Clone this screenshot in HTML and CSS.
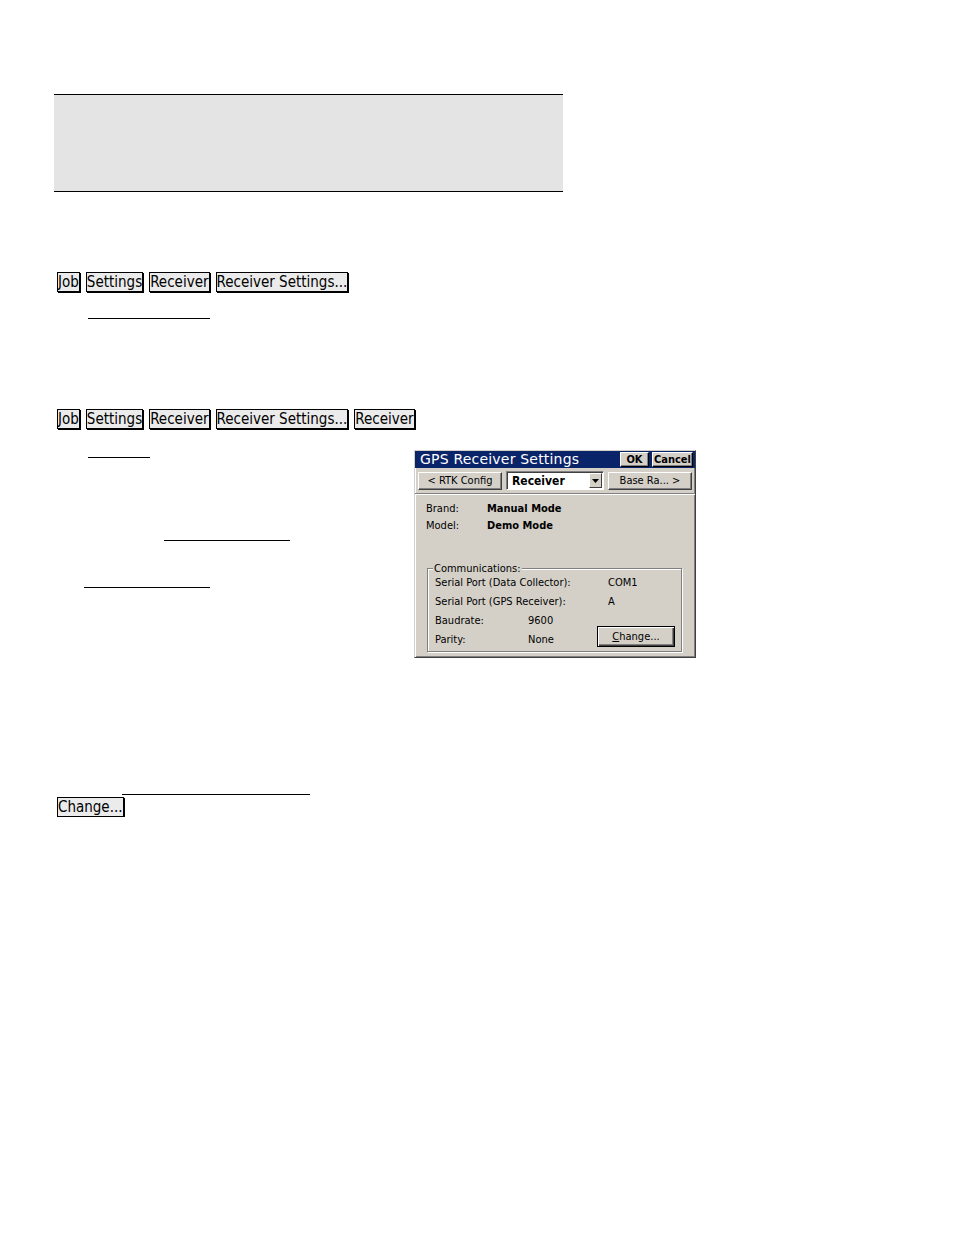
FILE: index.html
```html
<!DOCTYPE html>
<html>
<head>
<meta charset="utf-8">
<link rel="stylesheet" href="styles.css">
</head>
<body>
<div class="page">
  <div class="banner"></div>

  <div class="crumbs crumbs-1">
    <span class="crumb">Job</span>
    <span class="crumb">Settings</span>
    <span class="crumb">Receiver</span>
    <span class="crumb">Receiver Settings...</span>
  </div>
  <div class="blank blank-a"></div>

  <div class="crumbs crumbs-2">
    <span class="crumb">Job</span>
    <span class="crumb">Settings</span>
    <span class="crumb">Receiver</span>
    <span class="crumb">Receiver Settings...</span>
    <span class="crumb">Receiver</span>
  </div>

  <div class="section">
    <div class="left-col">
      <div class="blank blank-b"></div>
      <div class="blank blank-c"></div>
      <div class="blank blank-d"></div>
    </div>

    <div class="dialog">
      <div class="titlebar">
        <span class="title">GPS Receiver Settings</span>
        <span class="tbtn tbtn-ok">OK</span>
        <span class="tbtn tbtn-cancel">Cancel</span>
      </div>
      <div class="navrow">
        <span class="wbtn nav-prev">&lt; RTK Config</span>
        <span class="combo">
          <span class="combo-text">Receiver</span>
          <span class="combo-arrow"><svg width="7" height="4" viewBox="0 0 7 4"><path d="M0 0h7L3.5 4z" fill="#000"/></svg></span>
        </span>
        <span class="wbtn nav-next">Base Ra... &gt;</span>
      </div>
      <div class="sep"></div>
      <div class="info">
        <div class="info-row"><span class="info-label">Brand:</span><span class="info-value">Manual Mode</span></div>
        <div class="info-row"><span class="info-label">Model:</span><span class="info-value">Demo Mode</span></div>
      </div>
      <div class="group">
        <span class="legend">Communications:</span>
        <div class="grow"><span class="glabel wide">Serial Port (Data Collector):</span><span>COM1</span></div>
        <div class="grow"><span class="glabel wide">Serial Port (GPS Receiver):</span><span>A</span></div>
        <div class="gsplit">
          <div class="gleft">
            <div class="grow"><span class="glabel narrow">Baudrate:</span><span>9600</span></div>
            <div class="grow"><span class="glabel narrow">Parity:</span><span>None</span></div>
          </div>
          <span class="wbtn change-btn"><u>C</u>hange...</span>
        </div>
      </div>
    </div>
  </div>

  <div class="blank blank-e"></div>
  <div class="bottom-btn-row">
    <span class="crumb">Change...</span>
  </div>
</div>
</body>
</html>
```
FILE: styles.css
```css
html, body {
  margin: 0;
  padding: 0;
  background: #fff;
}
.page {
  padding-top: 94px;
  font-family: "DejaVu Sans Condensed", "DejaVu Sans", sans-serif;
  font-stretch: condensed;
  color: #000;
}
.banner {
  margin-left: 54px;
  width: 509px;
  height: 96px;
  background: #e4e4e4;
  border-top: 1px solid #000;
  border-bottom: 1px solid #000;
}
.crumbs {
  display: flex;
  gap: 6px;
  padding-left: 57px;
}
.crumbs-1 { margin-top: 80px; }
.crumbs-2 { margin-top: 90px; }
.crumb {
  display: inline-block;
  height: 18px;
  line-height: 18px;
  font-size: 15px;
  background: #ebebeb;
  border: 1px solid #000;
  box-shadow: 1px 1px 0 #000;
  white-space: nowrap;
}
.blank {
  border-top: 1px solid #000;
  height: 0;
}
.blank-a { margin-left: 88px; width: 122px; margin-top: 26px; }
.section {
  display: flex;
  margin-top: 21px;
}
.left-col {
  width: 414px;
  flex: none;
}
.blank-b { margin-left: 88px; width: 62px; margin-top: 7px; }
.blank-c { margin-left: 164px; width: 126px; margin-top: 82px; }
.blank-d { margin-left: 84px; width: 126px; margin-top: 46px; }

.dialog {
  width: 280px;
  height: 206px;
  background: #d4d0c8;
  border: 1px solid;
  border-color: #d4d0c8 #404040 #404040 #d4d0c8;
  box-shadow: inset 1px 1px 0 #fff, inset -1px -1px 0 #808080;
  font-family: "DejaVu Sans Condensed", "DejaVu Sans", sans-serif;
  font-stretch: condensed;
  font-size: 11px;
}
.titlebar {
  display: flex;
  align-items: center;
  height: 17px;
  margin: 0;
  background: #0a246a;
  padding-left: 5px;
  padding-right: 2px;
}
.title {
  color: #fff;
  font-family: "DejaVu Sans", sans-serif;
  font-stretch: normal;
  font-size: 14px;
  letter-spacing: 0.2px;
  flex: 1;
  line-height: 17px;
}
.tbtn {
  height: 13px;
  line-height: 13px;
  background: #d4d0c8;
  font-weight: bold;
  font-size: 11px;
  text-align: center;
  border: 1px solid;
  border-color: #fff #000 #000 #fff;
  box-shadow: inset -1px -1px 0 #808080;
}
.tbtn-ok { width: 27px; margin-right: 3px; }
.tbtn-cancel { width: 39px; }

.navrow {
  display: flex;
  align-items: center;
  gap: 4px;
  margin-top: 3px;
  padding-left: 3px;
}
.wbtn {
  display: inline-flex;
  align-items: center;
  justify-content: center;
  background: #d4d0c8;
  border: 1px solid;
  border-color: #fff #404040 #404040 #fff;
  box-shadow: inset -1px -1px 0 #808080;
  font-size: 11px;
  box-sizing: border-box;
  color: #000;
}
.nav-prev { width: 84px; height: 18px; }
.nav-next { width: 84px; height: 18px; }
.combo {
  display: flex;
  align-items: center;
  width: 98px;
  height: 19px;
  box-sizing: border-box;
  background: #fff;
  border: 1px solid;
  border-color: #808080 #fff #fff #808080;
  box-shadow: inset 1px 1px 0 #404040;
  padding: 1px 1px 1px 5px;
}
.combo-text {
  flex: 1;
  font-weight: bold;
  font-size: 12px;
}
.combo-arrow {
  width: 13px;
  height: 15px;
  box-sizing: border-box;
  display: flex;
  align-items: center;
  justify-content: center;
  background: #d4d0c8;
  border: 1px solid;
  border-color: #fff #404040 #404040 #fff;
}
.sep {
  margin-top: 3px;
  height: 1px;
  background: #808080;
  border-bottom: 1px solid #fff;
}
.info {
  padding-left: 11px;
  padding-top: 5px;
}
.info-row {
  display: flex;
  height: 17px;
  line-height: 17px;
}
.info-label { width: 61px; }
.info-value { font-weight: bold; }

.group {
  position: relative;
  margin: 34px 13px 0 12px;
  height: 84px;
  border: 1px solid #808080;
  box-shadow: 1px 1px 0 #fff, inset 1px 1px 0 #fff;
  padding-top: 4px;
  padding-left: 7px;
  box-sizing: border-box;
}
.legend {
  position: absolute;
  top: -7px;
  left: 5px;
  background: #d4d0c8;
  padding: 0 1px;
  line-height: 13px;
}
.grow {
  display: flex;
  height: 19px;
  line-height: 19px;
}
.glabel.wide { width: 173px; }
.glabel.narrow { width: 93px; }
.gsplit {
  display: flex;
  align-items: flex-start;
}
.gleft { width: 162px; }
.change-btn {
  width: 78px;
  height: 21px;
  margin-top: 15px;
  border: 1px solid #000;
  box-shadow: inset 1px 1px 0 #fff, inset -1px -1px 0 #404040, inset -2px -2px 0 #808080;
}

.blank-e { margin-left: 122px; width: 188px; margin-top: 136px; }
.bottom-btn-row {
  padding-left: 57px;
  margin-top: 2px;
  display: flex;
}
```
